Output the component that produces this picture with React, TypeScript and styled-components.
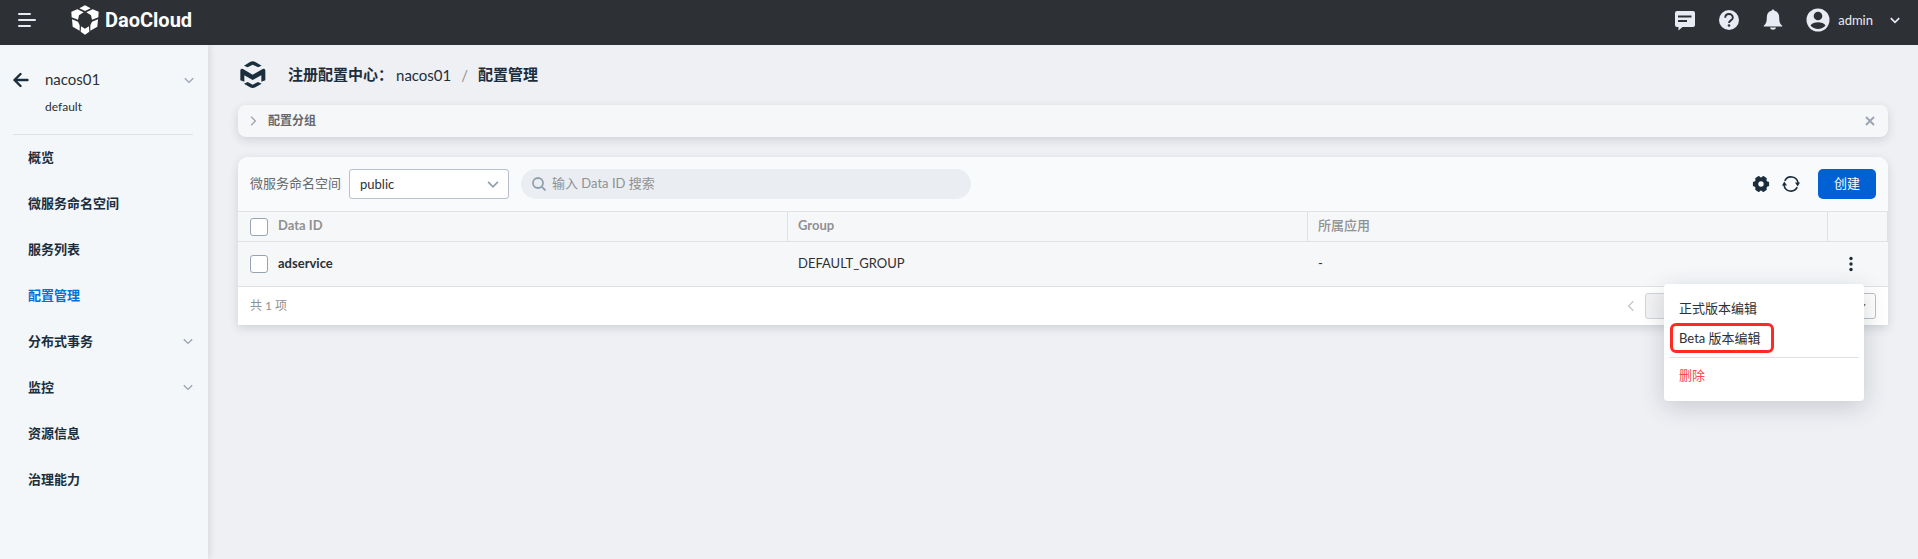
import React from 'react';
import styled, { createGlobalStyle, css } from 'styled-components';

const color = {
  ink: '#1b2e3d',
  text: '#2d3035',
  muted: '#8f9193',
  line: '#dfe1e6',
  control: '#b9c0cb',
  primary: '#0061d5',
  bar: '#2d3035',
  page: '#eff0f4',
  stripe: '#f6f7f9',
};

const cardShadow = '0 3px 10px rgba(40, 48, 60, 0.16)';

const GlobalStyle = createGlobalStyle`
  * { box-sizing: border-box; }
  body {
    margin: 0;
    background: ${color.page};
    color: ${color.text};
    font: 400 13px/20px Lato, 'Noto Sans CJK SC', sans-serif;
  }
  button, input, select { font: inherit; color: inherit; margin: 0; }
  ul { list-style: none; margin: 0; padding: 0; }
  a { color: inherit; text-decoration: none; }
  svg { display: block; flex: none; }
`;

const Shell = styled.div`
  min-height: 100vh;
  display: flex;
  flex-direction: column;
`;

const TopBar = styled.header`
  height: 45px;
  display: flex;
  align-items: center;
  padding: 0 17px 6px 18px;
  background: ${color.bar};
  color: #e8ebf3;
`;

const PlainButton = styled.button`
  display: flex;
  align-items: center;
  padding: 0;
  border: 0;
  background: none;
  cursor: pointer;
`;

const Brand = styled.a`
  display: flex;
  align-items: center;
  gap: 6px;
  margin-left: 35px;
  color: #fff;
  font: 700 20px/24px Roboto, sans-serif;
`;

const TopActions = styled.div`
  display: flex;
  align-items: center;
  gap: 22px;
  margin-left: auto;
`;

const UserButton = styled(PlainButton)`
  gap: 8px;
  svg:last-child { margin-left: 8px; }
`;

const Body = styled.div`
  flex: 1;
  display: flex;
`;

const Sidebar = styled.aside`
  width: 208px;
  flex: none;
  background: #f3f7fa;
  box-shadow: 2px 0 6px rgba(40, 48, 60, 0.12);
`;

const Instance = styled.div`
  display: grid;
  grid-template-columns: 16px 1fr 10px;
  column-gap: 16px;
  align-items: center;
  margin: 0 15px 0 13px;
  padding: 19px 0 17px;
  border-bottom: 1px solid ${color.line};
`;

const InstanceName = styled.strong`
  padding-bottom: 2px;
  font-weight: 400;
  font-size: 15px;
  line-height: 30px;
`;

const InstanceSpace = styled.span`
  grid-column: 2;
  font-size: 12px;
  line-height: 21px;
`;

const NavLink = styled.a<{ $active?: boolean }>`
  display: flex;
  align-items: center;
  justify-content: space-between;
  height: 46px;
  padding: 0 14px 2px 28px;
  color: ${(p) => (p.$active ? '#0072d6' : color.ink)};
  font-weight: 600;
`;

const Main = styled.main`
  flex: 1;
  min-width: 0;
  padding: 15px 30px 30px;
`;

const Crumbs = styled.nav`
  display: flex;
  align-items: center;
  height: 30px;
  color: ${color.ink};
  font-size: 15px;
`;

const CrumbLogo = styled.span`
  margin: 0 22px 0 2px;
`;

const CrumbLink = styled.a`
  margin-left: 3px;
`;

const CrumbStrong = styled.span`
  padding-bottom: 2px;
  font-weight: 600;
`;

const Slash = styled.span`
  margin: 0 10px;
  color: ${color.muted};
`;

const GroupPanel = styled.section`
  display: flex;
  align-items: center;
  justify-content: space-between;
  height: 32px;
  margin: 15px 0 20px;
  padding: 0 13px 0 9px;
  border-radius: 8px;
  background: ${color.stripe};
  box-shadow: ${cardShadow};
  color: #9aa3b0;
`;

const GroupToggle = styled(PlainButton)`
  gap: 9px;
  font-size: 12px;
  font-weight: 600;
  span { padding-bottom: 1px; color: #66686b; }
`;

const Card = styled.section`
  border-radius: 10px 10px 0 0;
  background: #fff;
  box-shadow: ${cardShadow};
`;

const Toolbar = styled.div`
  display: flex;
  align-items: center;
  padding: 12px;
  border-radius: 10px 10px 0 0;
  background: #f9fafc;
`;

const FieldLabel = styled.label`
  margin-right: 8px;
  padding-bottom: 2px;
  color: #66696d;
`;

const SelectBox = styled.span<{ $small?: boolean }>`
  display: inline-grid;
  align-items: center;
  width: ${(p) => (p.$small ? 72 : 160)}px;
  height: ${(p) => (p.$small ? 26 : 30)}px;
  border: 1px solid ${color.control};
  border-radius: 3px;
  background: #fff;
  select, svg { grid-area: 1 / 1; }
  select {
    width: 100%;
    height: 100%;
    padding: 0 10px;
    border: 0;
    background: none;
    appearance: none;
  }
  svg {
    justify-self: end;
    margin-right: 8px;
    color: ${(p) => (p.$small ? '#66696d' : '#8fa0ad')};
    pointer-events: none;
  }
`;

const SearchBox = styled.label`
  display: flex;
  align-items: center;
  gap: 6px;
  flex: 0 1 450px;
  height: 30px;
  margin: 0 12px;
  padding: 0 11px;
  border-radius: 15px;
  background: #eaedf2;
  color: #8fa0ad;
  input {
    flex: 1;
    min-width: 0;
    padding: 0 0 2px;
    border: 0;
    outline: 0;
    background: none;
    color: ${color.text};
  }
  input::placeholder { color: ${color.muted}; opacity: 1; }
`;

const ToolButtons = styled.div`
  display: flex;
  align-items: center;
  gap: 12px;
  margin-left: auto;
  color: ${color.ink};
`;

const CreateButton = styled.button`
  width: 58px;
  height: 30px;
  margin-left: 6px;
  padding: 0 0 2px;
  border: 0;
  border-radius: 5px;
  background: ${color.primary};
  color: #fff;
  cursor: pointer;
`;

const Table = styled.table`
  width: 100%;
  table-layout: fixed;
  border-collapse: separate;
  border-spacing: 0;
  background: ${color.stripe};
  th, td {
    padding: 0 10px 2px;
    text-align: left;
    border-bottom: 1px solid ${color.line};
  }
`;

const HeadCell = styled.th<{ $plain?: boolean; $light?: boolean }>`
  height: 31px;
  border-top: 1px solid ${color.line};
  ${(p) => !p.$plain && css`border-right: 1px solid ${color.line};`}
  && { padding-bottom: 3px; }
  color: ${color.muted};
  font-weight: ${(p) => (p.$light ? 500 : 700)};
`;

const BodyCell = styled.td<{ $strong?: boolean }>`
  height: 45px;
  font-weight: ${(p) => (p.$strong ? 700 : 400)};
`;

const CheckHead = styled(HeadCell)`
  && { padding: 0 0 0 12px; }
`;

const CheckCell = styled(BodyCell)`
  && { padding: 0 0 0 12px; }
`;

const CheckCol = styled.col`
  width: 30px;
`;

const ActionCol = styled.col`
  width: 60px;
`;

const Check = styled.input`
  display: block;
  width: 18px;
  height: 18px;
  margin: 0;
  border: 1px solid #98a4b3;
  border-radius: 3px;
  background: #fff;
  appearance: none;
`;

const ActionCell = styled(BodyCell)`
  position: relative;
  && { padding-bottom: 0; }
`;

const DotsButton = styled(PlainButton)`
  width: 26px;
  height: 26px;
  justify-content: center;
  color: ${color.ink};
`;

const Menu = styled.ul`
  && { padding: 9px 5px 11px; }
  position: absolute;
  z-index: 2;
  top: 42px;
  right: 24px;
  width: 200px;
  border-radius: 4px;
  background: #fff;
  box-shadow: 0 6px 24px rgba(40, 48, 60, 0.2);
`;

const MenuItem = styled.button<{ $marked?: boolean; $danger?: boolean }>`
  display: block;
  height: 30px;
  margin-left: 1px;
  padding: 0 10px 0 6px;
  border: 3px solid ${(p) => (p.$marked ? '#ff2a22' : 'transparent')};
  border-radius: 6px;
  background: none;
  color: ${(p) => (p.$danger ? '#f5484d' : color.text)};
  cursor: pointer;
`;

const MenuRule = styled.li`
  height: 1px;
  margin: 4px 0 2px;
  background: ${color.line};
`;

const Footer = styled.footer`
  display: flex;
  align-items: center;
  justify-content: space-between;
  height: 38px;
  padding: 0 12px;
  color: ${color.muted};
  font-size: 12px;
`;

const Pager = styled.div`
  display: flex;
  align-items: center;
  gap: 8px;
  color: #c3c7ce;
`;

const PageInput = styled.input`
  width: 51px;
  height: 26px;
  border: 1px solid #d0d4db;
  border-radius: 3px;
  background: #f2f2f4;
`;

const Spacer = styled.span`
  width: 92px;
`;

type ChevronProps = { size?: number; width?: number; dir?: 'down' | 'right' | 'left' };

function Chevron({ size = 12, width = 1.1, dir = 'down' }: ChevronProps) {
  const d = { down: 'M1.5 3.500l3.500 3.500 3.500-3.500', right: 'M3.500 1.500l3.500 3.500-3.500 3.500', left: 'M7 1L3 5l4 4' }[dir];
  return (
    <svg width={size} height={size} viewBox="0 0 10 10" fill="none" stroke="currentColor" strokeWidth={width}>
      <path d={d} />
    </svg>
  );
}

const MenuIcon = () => (
  <svg width="18" height="16" viewBox="0 0 18 16" fill="none" stroke="currentColor" strokeWidth="2" strokeLinecap="round">
    <path d="M1 2h11M1 8h16M1 14h11" />
  </svg>
);

const BrandIcon = () => (
  <svg width="28" height="30" viewBox="20 13 84 90" fill="currentColor">
    <path d="M62 14l17 9-17 8-17-8z" />
    <path d="M21 33l18-7 19 9-14 9-3 13-19-7zM103 33l-18-7-19 9 14 9 3 13 19-7z" />
    <path d="M23 56l18 7 5 11v16L25 78zM101 56l-18 7-5 11v16l21-12z" />
    <path d="M50 77l12 7 12-7 1 16-13 9-13-9z" />
  </svg>
);

const MeshIcon = () => (
  <svg width="26" height="28" viewBox="721 183 78 84" fill={color.ink}>
    <path d="M733 197l18-11q8-4 16 0l19 11-11 5-16-8-15 8z" />
    <path d="M722 212q0-8 8-5l29 17 30-17q8-3 8 5v29l-12 4v-19l-26 14-25-14v19l-12-4z" />
    <path d="M733 251l11-5 15 8 16-8 11 5-19 11q-8 4-16 0z" />
  </svg>
);

const ChatIcon = () => (
  <svg width="22" height="22" viewBox="0 0 22 22">
    <path d="M3 2h16q2 0 2 2v12q0 2-2 2H8.500l-4 3.500V18H3q-2 0-2-2V4q0-2 2-2z" fill="currentColor" />
    <path d="M4 7.500h13.500M4 12h9" stroke={color.bar} strokeWidth="1.800" fill="none" />
  </svg>
);

const HelpIcon = () => (
  <svg width="22" height="22" viewBox="0 0 22 22">
    <circle cx="11" cy="11" r="10" fill="currentColor" />
    <path d="M7.200 8.700c0-5 7.600-5 7.600 0 0 2.600-3.800 2.700-3.800 5.200" stroke={color.bar} strokeWidth="1.900" fill="none" />
    <circle cx="11" cy="16.500" r="1.300" fill={color.bar} />
  </svg>
);

const BellIcon = () => (
  <svg width="22" height="22" viewBox="0 0 22 22" fill="currentColor">
    <path d="M11 0.500c.9 0 1.300.6 1.400 1.300 3.200.7 4.800 3.300 4.800 6.400 0 4.800.8 6.600 3 8.300v1H1.800v-1c2.200-1.700 3-3.500 3-8.300 0-3.100 1.600-5.700 4.800-6.400.1-.7.500-1.300 1.400-1.300zM8 18.600h6c-.4 3-5.600 3-6 0z" />
  </svg>
);

const UserIcon = () => (
  <svg width="24" height="24" viewBox="0 0 24 24">
    <circle cx="12" cy="12" r="11.500" fill="currentColor" />
    <circle cx="12" cy="8" r="4.300" fill={color.bar} />
    <path d="M4.500 17.500c2.500-4.300 12.500-4.300 15 0-3.500 4.500-11.500 4.500-15 0z" fill={color.bar} />
  </svg>
);

const BackIcon = () => (
  <svg width="16" height="16" viewBox="0 0 16 16" fill="none" stroke={color.ink} strokeWidth="2.400" strokeLinecap="round" strokeLinejoin="round">
    <path d="M14.500 8H1.500M7.500 2l-6 6 6 6" />
  </svg>
);

const CloseIcon = () => (
  <svg width="10" height="10" viewBox="0 0 10 10" fill="none" stroke="currentColor" strokeWidth="1.800">
    <path d="M1 1l8 8M9 1L1 9" />
  </svg>
);

const SearchIcon = () => (
  <svg width="14" height="14" viewBox="0 0 14 14" fill="none" stroke="currentColor" strokeWidth="1.800">
    <circle cx="6" cy="6" r="5" />
    <path d="M9.700 9.700l3.800 3.800" />
  </svg>
);

const GearIcon = () => (
  <svg width="18" height="18" viewBox="-9 -9 18 18" fill="currentColor">
    <circle r="4.700" fill="none" stroke="currentColor" strokeWidth="4" />
    {[0, 60, 120, 180, 240, 300].map((a) => (
      <rect key={a} x="3.800" y="-2.600" width="4.300" height="5.200" rx="1.300" transform={`rotate(${a})`} />
    ))}
  </svg>
);

const RefreshIcon = () => (
  <svg width="18" height="18" viewBox="-9 -9 18 18" fill="none" stroke="currentColor" strokeWidth="1.600">
    <path d="M-6.200 -3.200A7 7 0 0 1 7 -1M6.200 3.200A7 7 0 0 1 -7 1" />
    <path d="M4 -1.500h5L6.700 2.600zM-4 1.500h-5L-6.700 -2.600z" fill="currentColor" stroke="none" />
  </svg>
);

const DotsIcon = () => (
  <svg width="4" height="16" viewBox="0 0 4 16" fill="currentColor">
    <circle cx="2" cy="2.500" r="1.700" />
    <circle cx="2" cy="8" r="1.700" />
    <circle cx="2" cy="13.500" r="1.700" />
  </svg>
);

const navItems = [
  { label: '概览' },
  { label: '微服务命名空间' },
  { label: '服务列表' },
  { label: '配置管理', active: true },
  { label: '分布式事务', nested: true },
  { label: '监控', nested: true },
  { label: '资源信息' },
  { label: '治理能力' },
];

const NavChevron = styled.span`
  color: #9aa3b0;
`;

export default function App() {
  return (
    <Shell>
      <GlobalStyle />
      <TopBar>
        <PlainButton aria-label="菜单"><MenuIcon /></PlainButton>
        <Brand href="#"><BrandIcon />DaoCloud</Brand>
        <TopActions>
          <PlainButton aria-label="消息"><ChatIcon /></PlainButton>
          <PlainButton aria-label="帮助"><HelpIcon /></PlainButton>
          <PlainButton aria-label="通知"><BellIcon /></PlainButton>
          <UserButton>
            <UserIcon />
            admin
            <Chevron width={1.4} />
          </UserButton>
        </TopActions>
      </TopBar>
      <Body>
        <Sidebar>
          <Instance>
            <PlainButton aria-label="返回"><BackIcon /></PlainButton>
            <InstanceName>nacos01</InstanceName>
            <NavChevron><Chevron /></NavChevron>
            <InstanceSpace>default</InstanceSpace>
          </Instance>
          <nav>
            <ul>
              {navItems.map((item) => (
                <li key={item.label}>
                  <NavLink href="#" $active={item.active}>
                    {item.label}
                    {item.nested && <NavChevron><Chevron /></NavChevron>}
                  </NavLink>
                </li>
              ))}
            </ul>
          </nav>
        </Sidebar>
        <Main>
          <Crumbs>
            <CrumbLogo><MeshIcon /></CrumbLogo>
            <CrumbStrong>注册配置中心：</CrumbStrong>
            <CrumbLink href="#">nacos01</CrumbLink>
            <Slash>/</Slash>
            <CrumbStrong>配置管理</CrumbStrong>
          </Crumbs>
          <GroupPanel>
            <GroupToggle><Chevron dir="right" /><span>配置分组</span></GroupToggle>
            <PlainButton aria-label="关闭"><CloseIcon /></PlainButton>
          </GroupPanel>
          <Card>
            <Toolbar>
              <FieldLabel htmlFor="namespace">微服务命名空间</FieldLabel>
              <SelectBox>
                <select id="namespace" defaultValue="public">
                  <option>public</option>
                </select>
                <Chevron width={1.2} size={14} />
              </SelectBox>
              <SearchBox>
                <SearchIcon />
                <input type="search" aria-label="搜索" placeholder="输入 Data ID 搜索" />
              </SearchBox>
              <ToolButtons>
                <PlainButton aria-label="设置"><GearIcon /></PlainButton>
                <PlainButton aria-label="刷新"><RefreshIcon /></PlainButton>
                <CreateButton>创建</CreateButton>
              </ToolButtons>
            </Toolbar>
            <Table>
              <colgroup>
                <CheckCol />
                <col />
                <col />
                <col />
                <ActionCol />
              </colgroup>
              <thead>
                <tr>
                  <CheckHead $plain><Check type="checkbox" aria-label="全选" /></CheckHead>
                  <HeadCell>Data ID</HeadCell>
                  <HeadCell>Group</HeadCell>
                  <HeadCell $light>所属应用</HeadCell>
                  <HeadCell />
                </tr>
              </thead>
              <tbody>
                <tr>
                  <CheckCell><Check type="checkbox" aria-label="adservice" /></CheckCell>
                  <BodyCell $strong>adservice</BodyCell>
                  <BodyCell>DEFAULT_GROUP</BodyCell>
                  <BodyCell>-</BodyCell>
                  <ActionCell>
                    <DotsButton aria-label="操作"><DotsIcon /></DotsButton>
                    <Menu>
                      <li><MenuItem>正式版本编辑</MenuItem></li>
                      <li><MenuItem $marked>Beta 版本编辑</MenuItem></li>
                      <MenuRule role="separator" />
                      <li><MenuItem $danger>删除</MenuItem></li>
                    </Menu>
                  </ActionCell>
                </tr>
              </tbody>
            </Table>
            <Footer>
              <span>共 1 项</span>
              <Pager>
                <PlainButton aria-label="上一页"><Chevron dir="left" /></PlainButton>
                <PageInput aria-label="页码" />
                <Spacer />
                <SelectBox $small>
                  <select aria-label="每页条数" />
                  <Chevron width={1.2} />
                </SelectBox>
              </Pager>
            </Footer>
          </Card>
        </Main>
      </Body>
    </Shell>
  );
}
